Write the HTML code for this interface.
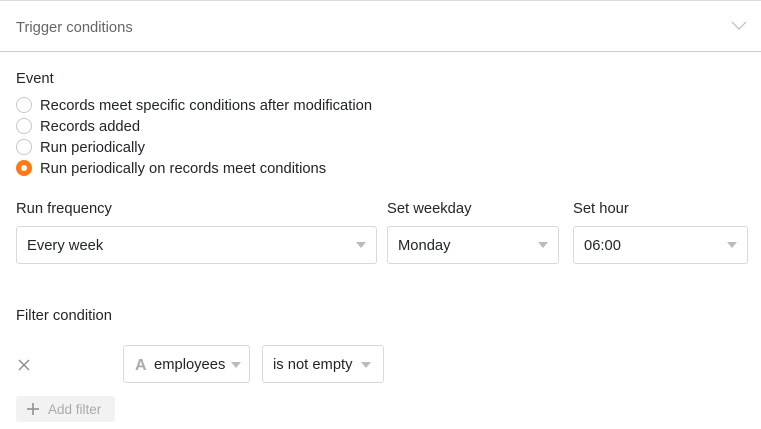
<!DOCTYPE html>
<html><head><style>
*{box-sizing:border-box;margin:0;padding:0}
body{width:761px;height:429px;background:#fff;font-family:"Liberation Sans",sans-serif;font-size:14.75px;color:#212529;position:relative;overflow:hidden}
.a{position:absolute}
.radio{position:absolute;left:16px;width:16px;height:16px;border:1px solid #c8c8c8;border-radius:50%;background:#fff}
.radio.on{border:none;background:#ff7a12}
.radio.on::after{content:"";position:absolute;left:5px;top:5px;width:6px;height:6px;border-radius:50%;background:#fff}
.lbl{position:absolute;left:40px;line-height:16px}
.sel{position:absolute;border:1px solid #d9d9d9;border-radius:3px;height:38px;line-height:39px;padding-left:10px}
.tri{position:absolute;right:10px;top:15px;width:0;height:0;border-left:5px solid transparent;border-right:5px solid transparent;border-top:6px solid #bbb}
</style></head><body>
<div class="a" style="left:0;top:0;width:761px;height:1px;background:#ddd"></div>
<div class="a" style="left:0;top:51px;width:761px;height:1px;background:#ccc"></div>
<div class="a" style="left:16px;top:19px;color:#666;line-height:18px">Trigger conditions</div>
<svg class="a" style="left:731px;top:19px" width="16" height="12"><path d="M1 3 L8 10 L15 3" fill="none" stroke="#bbb" stroke-width="1.2"/></svg>
<div class="a" style="left:16px;top:71px;line-height:16px">Event</div>
<div class="radio" style="top:97px"></div><div class="lbl" style="top:98px">Records meet specific conditions after modification</div>
<div class="radio" style="top:118px"></div><div class="lbl" style="top:119px">Records added</div>
<div class="radio" style="top:139px"></div><div class="lbl" style="top:140px">Run periodically</div>
<div class="radio on" style="top:160px"></div><div class="lbl" style="top:161px">Run periodically on records meet conditions</div>
<div class="a" style="left:16px;top:201px;line-height:16px">Run frequency</div>
<div class="a" style="left:387px;top:201px;line-height:16px">Set weekday</div>
<div class="a" style="left:573px;top:201px;line-height:16px">Set hour</div>
<div class="sel" style="left:16px;top:226px;width:361px">Every week<div class="tri"></div></div>
<div class="sel" style="left:387px;top:226px;width:172px">Monday<div class="tri"></div></div>
<div class="sel" style="left:573px;top:226px;width:175px">06:00<div class="tri"></div></div>
<div class="a" style="left:16px;top:308px;line-height:16px">Filter condition</div>
<svg class="a" style="left:18px;top:359px" width="12" height="12"><path d="M1 1L11 11M11 1L1 11" stroke="#888" stroke-width="1.3"/></svg>
<div class="sel" style="left:123px;top:345px;width:127px;height:38px;padding-left:0"><span style="position:absolute;left:11px;color:#aaa;font-size:16px;font-weight:bold">A</span><span style="position:absolute;left:30px">employees</span><div class="tri" style="right:8px;top:16px"></div></div>
<div class="sel" style="left:262px;top:345px;width:122px">is not empty<div class="tri" style="right:12px;top:16px"></div></div>
<div class="a" style="left:16px;top:396px;width:99px;height:26px;background:#f2f2f2;border-radius:3px;color:#aaa;font-size:13.5px;line-height:27px;padding-left:32px">Add filter</div>
<svg class="a" style="left:26px;top:402px" width="14" height="14"><path d="M7 1V13M1 7H13" stroke="#999" stroke-width="1.8"/></svg>
</body></html>
